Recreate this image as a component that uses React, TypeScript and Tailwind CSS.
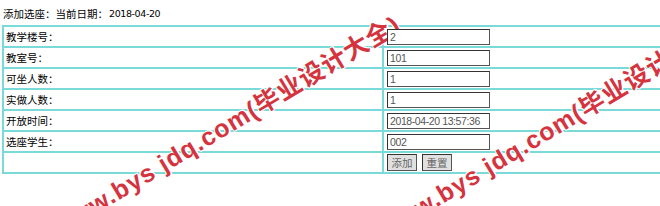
import React from "react";

const rows = [
  { label: "教学楼号：", value: "2" },
  { label: "教室号：", value: "101" },
  { label: "可坐人数：", value: "1" },
  { label: "实做人数：", value: "1" },
  { label: "开放时间：", value: "2018-04-20 13:57:36" },
  { label: "选座学生：", value: "002" },
];

const cjk = "font-['SimSun','Noto_Sans_CJK_SC',sans-serif]";
const cell = "border border-[#7ad9d9]";
const btn = `h-[17px] w-[30px] p-0 border border-t-[#333] border-l-[#333] border-r-[#555] border-b-[#555] bg-[#e0e0e0] text-[10.5px] leading-[13px] text-[#666] ${cjk}`;

const Watermark = ({ className }: { className: string }) => (
  <div
    className={`pointer-events-none absolute z-20 whitespace-nowrap origin-left rotate-[-31deg] text-[25px] leading-[28px] font-bold tracking-[1px] text-[#d5343f] font-['Liberation_Sans','Noto_Sans_CJK_SC',sans-serif] [text-shadow:1px_1px_0_#fff,-1px_-1px_0_#fff,1px_-1px_0_#fff,-1px_1px_0_#fff] ${className}`}
  >
    www.bys jdq.com(毕业设计大全)
  </div>
);

export default function App() {
  return (
    <div className="relative w-[660px] h-[206px] overflow-hidden bg-white">
      <div className={`h-[25px] pl-[3px] pt-[2px] text-[10.5px] leading-[13px] text-black ${cjk} flex items-center`}>
        <span>添加选座：</span>
        <span>当前日期：</span>
        <span className="ml-[1px] text-[9.5px] font-['DejaVu_Sans',sans-serif] tracking-[-0.4px]">2018-04-20</span>
      </div>

      <table className="ml-[2px] w-[960px] border-separate border-spacing-0 border border-[#7ad9d9]">
        <tbody>
          {rows.map((r) => (
            <tr key={r.label} className="h-[21px]">
              <td className={`w-[380px] ${cell} pl-[2px] text-[10.5px] text-black ${cjk}`}>
                {r.label}
              </td>
              <td className={`${cell} pl-[3px]`}>
                <div className="relative z-30 w-[103px] h-[16px] px-[2px] border border-t-[#333] border-l-[#333] border-r-[#555] border-b-[#555] bg-white text-[10.5px] leading-[14px] tracking-[-0.4px] text-[#555] font-['Liberation_Sans',sans-serif] whitespace-nowrap overflow-hidden">
                  <span>{r.value}</span>
                </div>
              </td>
            </tr>
          ))}
          <tr className="h-[21px]">
            <td className={`w-[380px] ${cell}`}></td>
            <td className={`${cell} pl-[3px]`}>
              <div className="flex gap-[5px]">
                <button className={btn}>添加</button>
                <button className={btn}>重置</button>
              </div>
            </td>
          </tr>
        </tbody>
      </table>

      <Watermark className="left-[55px] top-[214px]" />
      <Watermark className="left-[380px] top-[217px]" />
    </div>
  );
}
